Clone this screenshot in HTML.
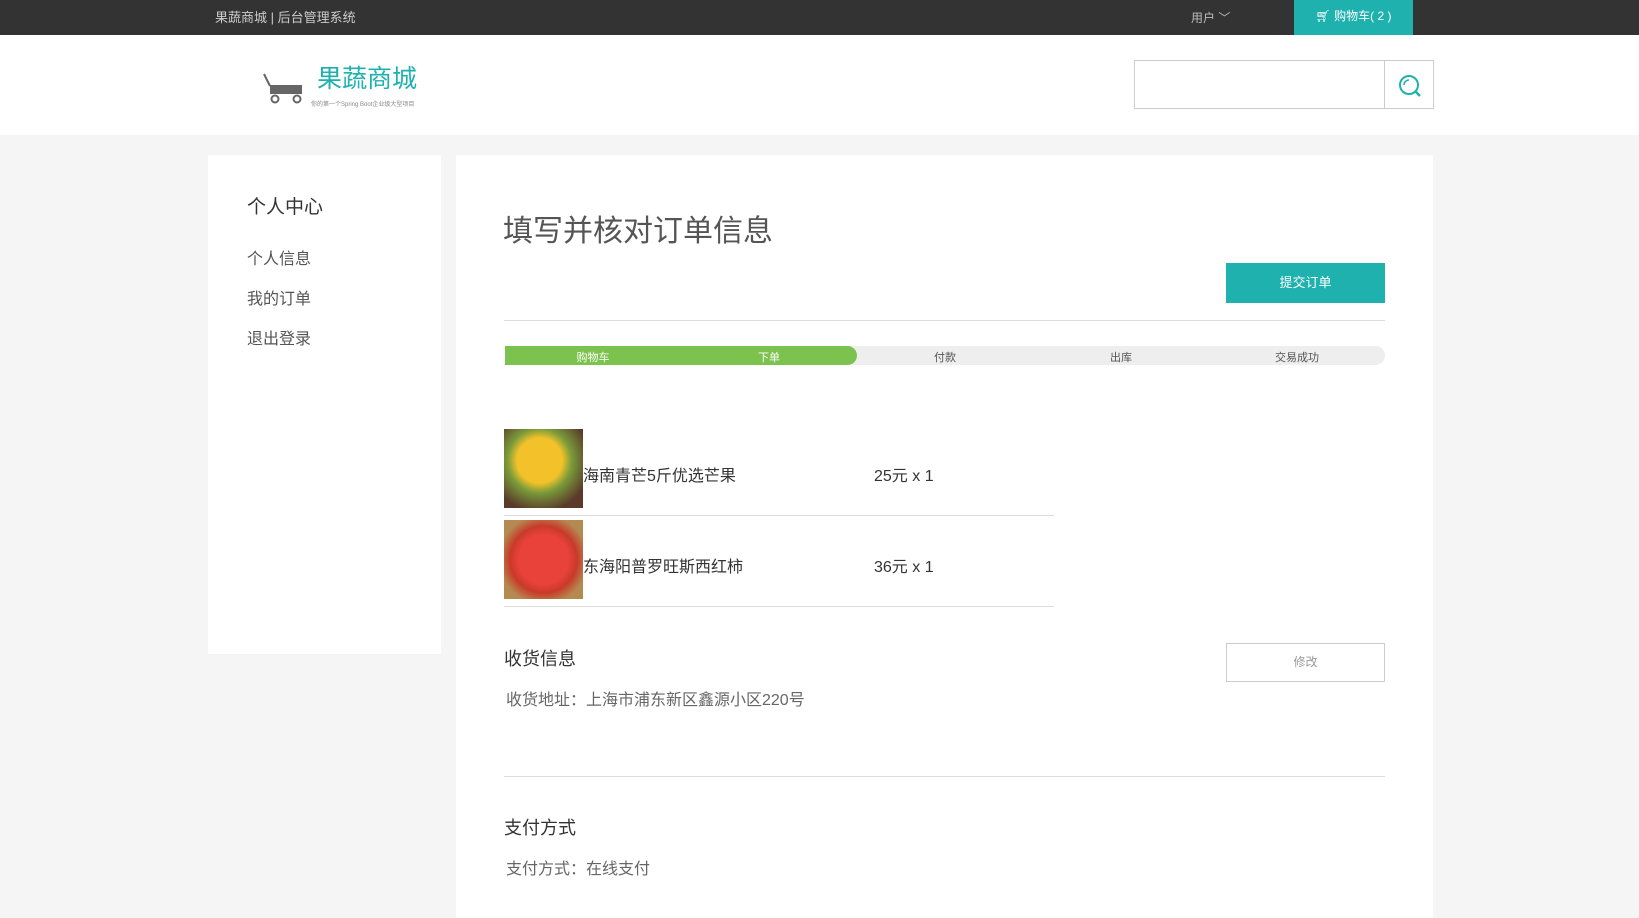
<!DOCTYPE html>
<html><head><meta charset="utf-8"><style>
*{margin:0;padding:0;box-sizing:border-box}
body{width:1639px;height:918px;overflow:hidden;background:#f5f5f5;font-family:"Liberation Sans","Noto Sans CJK SC",sans-serif;color:#333;position:relative}
.a{position:absolute;white-space:nowrap}
</style></head><body>
<div class="a" style="left:0;top:0;width:1639px;height:35px;background:#333"></div>
<div class="a" style="left:215px;top:7px;font-size:13px;color:#ccc">果蔬商城 | 后台管理系统</div>
<div class="a" style="left:1191px;top:9px;font-size:12px;color:#bbb">用户 ﹀</div>
<div class="a" style="left:1294px;top:0;width:119px;height:35px;background:#1eb1ae;color:#fff;font-size:12px;line-height:33px;text-align:center">🛒︎ 购物车( 2 )</div>
<div class="a" style="left:0;top:35px;width:1639px;height:100px;background:#fff"></div>
<svg class="a" style="left:262px;top:72px" width="42" height="32" viewBox="0 0 42 32"><path d="M2 2 L8 14" stroke="#666" stroke-width="2" fill="none"/><rect x="8" y="13" width="32" height="9" fill="#666"/><circle cx="13" cy="27" r="3.5" fill="none" stroke="#666" stroke-width="2"/><circle cx="35" cy="27" r="3.5" fill="none" stroke="#666" stroke-width="2"/></svg>
<div class="a" style="left:317px;top:59px;font-size:25px;color:#1eb1ae">果蔬商城</div>
<div class="a" style="left:311px;top:99px;font-size:6px;color:#888">你的第一个Spring Boot企业级大型项目</div>
<div class="a" style="left:1134px;top:60px;width:300px;height:49px;border:1px solid #ccc;background:#fff"></div>
<div class="a" style="left:1384px;top:60px;width:1px;height:49px;background:#ccc"></div>
<svg class="a" style="left:1397px;top:73px" width="26" height="26" viewBox="0 0 26 26"><circle cx="12" cy="12" r="9" fill="none" stroke="#1eb1ae" stroke-width="2"/><path d="M7 12a5 5 0 0 1 5-5" stroke="#1eb1ae" stroke-width="1.5" fill="none"/><path d="M18 18l5 5" stroke="#1eb1ae" stroke-width="2.5"/></svg>
<div class="a" style="left:208px;top:155px;width:233px;height:499px;background:#fff"></div>
<div class="a" style="left:247px;top:192px;font-size:19px;color:#333">个人中心</div>
<div class="a" style="left:247px;top:245px;font-size:16px;color:#555">个人信息</div>
<div class="a" style="left:247px;top:285px;font-size:16px;color:#555">我的订单</div>
<div class="a" style="left:247px;top:325px;font-size:16px;color:#555">退出登录</div>
<div class="a" style="left:456px;top:155px;width:977px;height:763px;background:#fff"></div>
<div class="a" style="left:503px;top:206px;font-size:30px;color:#555">填写并核对订单信息</div>
<div class="a" style="left:1226px;top:263px;width:159px;height:40px;background:#1eb1ae;color:#fff;font-size:13px;line-height:40px;text-align:center">提交订单</div>
<div class="a" style="left:504px;top:320px;width:881px;height:1px;background:#ddd"></div>
<div class="a" style="left:505px;top:346px;width:880px;height:19px;background:#eee;border-radius:0 10px 10px 0"></div>
<div class="a" style="left:505px;top:346px;width:352px;height:19px;background:#7cc24e;border-radius:0 10px 10px 0"></div>
<div class="a" style="left:505px;top:349px;width:176px;text-align:center;font-size:11px;color:#fff">购物车</div>
<div class="a" style="left:681px;top:349px;width:176px;text-align:center;font-size:11px;color:#fff">下单</div>
<div class="a" style="left:857px;top:349px;width:176px;text-align:center;font-size:11px;color:#555">付款</div>
<div class="a" style="left:1033px;top:349px;width:176px;text-align:center;font-size:11px;color:#555">出库</div>
<div class="a" style="left:1209px;top:349px;width:176px;text-align:center;font-size:11px;color:#555">交易成功</div>
<div class="a" style="left:504px;top:429px;width:79px;height:79px;background:radial-gradient(circle at 45% 40%,#f3c22a 0 35%,#7a9b3a 50%,#5a3a2a 80%)"></div>
<div class="a" style="left:583px;top:462px;font-size:16px;color:#333">海南青芒5斤优选芒果</div>
<div class="a" style="left:874px;top:462px;font-size:16px;color:#333">25元 x 1</div>
<div class="a" style="left:504px;top:515px;width:550px;height:1px;background:#ddd"></div>
<div class="a" style="left:504px;top:520px;width:79px;height:79px;background:radial-gradient(circle at 50% 50%,#e8423a 0 45%,#c83a2a 60%,#b48a50 80%)"></div>
<div class="a" style="left:583px;top:553px;font-size:16px;color:#333">东海阳普罗旺斯西红柿</div>
<div class="a" style="left:874px;top:553px;font-size:16px;color:#333">36元 x 1</div>
<div class="a" style="left:504px;top:606px;width:550px;height:1px;background:#ddd"></div>
<div class="a" style="left:504px;top:645px;font-size:18px;color:#333">收货信息</div>
<div class="a" style="left:1226px;top:643px;width:159px;height:39px;border:1px solid #ccc;color:#999;font-size:12px;line-height:37px;text-align:center">修改</div>
<div class="a" style="left:506px;top:686px;font-size:16px;color:#666">收货地址：上海市浦东新区鑫源小区220号</div>
<div class="a" style="left:504px;top:776px;width:881px;height:1px;background:#ddd"></div>
<div class="a" style="left:504px;top:814px;font-size:18px;color:#333">支付方式</div>
<div class="a" style="left:506px;top:855px;font-size:16px;color:#666">支付方式：在线支付</div>
</body></html>
